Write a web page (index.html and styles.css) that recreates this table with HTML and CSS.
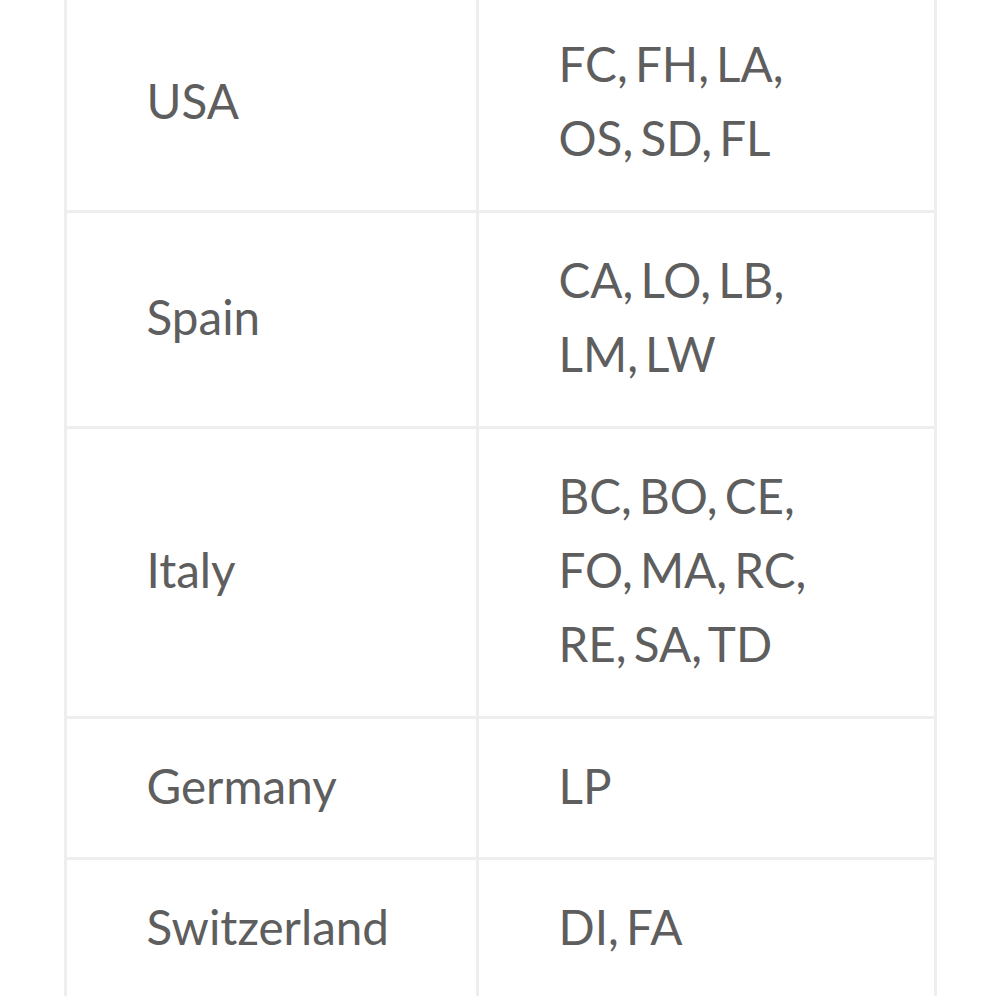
FILE: index.html
```html
<!DOCTYPE html>
<html>
<head>
<meta charset="utf-8">
<link rel="stylesheet" href="styles.css">
</head>
<body>
<table class="codes">
  <colgroup><col class="col-country"><col class="col-codes"></colgroup>
  <tbody>
    <tr><td>USA</td><td class="list">FC, FH, LA,<br>OS, SD, FL</td></tr>
    <tr><td>Spain</td><td class="list">CA, LO, LB,<br>LM, LW</td></tr>
    <tr><td>Italy</td><td class="list">BC, BO, CE,<br>FO, MA, RC,<br>RE, SA, TD</td></tr>
    <tr><td>Germany</td><td class="list">LP</td></tr>
    <tr><td>Switzerland</td><td class="list">DI, FA</td></tr>
  </tbody>
</table>
</body>
</html>
```
FILE: styles.css
```css
html, body {
  margin: 0;
  padding: 0;
  background: #ffffff;
}
body {
  font-family: Lato, "Open Sans", sans-serif;
  color: #5e5e5e;
  overflow: hidden;
}
.codes {
  width: 873px;
  margin: -6px auto 0;
  border-collapse: collapse;
  table-layout: fixed;
}
.col-country { width: 412px; }
.codes td {
  border: 3px solid #eeeeee;
  padding: 30px 78px 34px 80px;
  font-size: 47.6px;
  line-height: 74.4px;
  vertical-align: middle;
  text-align: left;
}
.codes td.list {
  word-spacing: -5px;
}
```
